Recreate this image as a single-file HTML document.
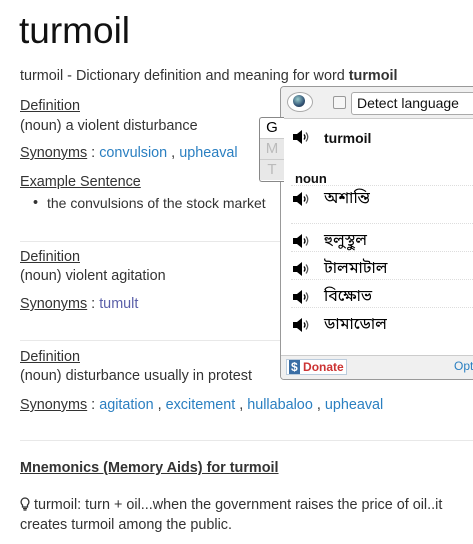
<!DOCTYPE html>
<html><head><meta charset="utf-8"><style>
body{margin:0;width:473px;height:544px;overflow:hidden;background:#fff;font-family:"Liberation Sans",sans-serif;font-size:14.4px;color:#333;position:relative}
.a{position:absolute;white-space:nowrap;line-height:20px}
u{color:#333}
.l{color:#2a7fc1}
.hr{position:absolute;left:20px;width:453px;height:1px;background:#e8e8e8}
.bn{font-family:"Liberation Sans","Noto Sans Bengali","Lohit Bengali",sans-serif;font-size:16px;color:#000;position:absolute;left:43px}
.sp{position:absolute;left:11px}
.dot{position:absolute;left:10px;right:0;border-top:1px dotted #ddd}
</style></head><body>
<svg width="0" height="0" style="position:absolute"><defs><symbol id="spk" viewBox="0 0 18 16"><path d="M1 5h4l5-4v14l-5-4H1z" fill="#000"/><path d="M12 5.5q2 2.5 0 5" stroke="#000" stroke-width="1.4" fill="none"/><path d="M14 3.5q3.5 4.5 0 9" stroke="#555" stroke-width="1.2" fill="none"/></symbol></defs></svg>
<div class="a" style="left:19px;top:10px;font-size:37px;line-height:42px;color:#111">turmoil</div>
<div class="a" style="left:20px;top:66px">turmoil - Dictionary definition and meaning for word <b>turmoil</b></div>
<div class="a" style="left:20px;top:96px"><u>Definition</u></div>
<div class="a" style="left:20px;top:116px">(noun) a violent disturbance</div>
<div class="a" style="left:20px;top:143px"><u>Synonyms</u> : <span class="l">convulsion</span> , <span class="l">upheaval</span></div>
<div class="a" style="left:20px;top:172px"><u>Example Sentence</u></div>
<div class="a" style="left:33px;top:193px">•</div>
<div class="a" style="left:47px;top:193px;font-size:14px">the convulsions of the stock market</div>
<div class="hr" style="top:241px"></div>
<div class="a" style="left:20px;top:247px"><u>Definition</u></div>
<div class="a" style="left:20px;top:266px">(noun) violent agitation</div>
<div class="a" style="left:20px;top:294px"><u>Synonyms</u> : <span class="l" style="color:#5a5fa8">tumult</span></div>
<div class="hr" style="top:340px"></div>
<div class="a" style="left:20px;top:347px"><u>Definition</u></div>
<div class="a" style="left:20px;top:366px">(noun) disturbance usually in protest</div>
<div class="a" style="left:20px;top:395px"><u>Synonyms</u> : <span class="l">agitation</span> , <span class="l">excitement</span> , <span class="l">hullabaloo</span> , <span class="l">upheaval</span></div>
<div class="hr" style="top:440px"></div>
<div class="a" style="left:20px;top:458px;font-weight:bold"><u>Mnemonics (Memory Aids) for turmoil</u></div>
<div class="a" style="left:20px;top:495px"><svg width="10" height="14" viewBox="0 0 10 14" style="vertical-align:-2px"><path d="M5 1a4 4 0 0 0-2.5 7v2h5V8A4 4 0 0 0 5 1z" fill="none" stroke="#333" stroke-width="1.3"/><path d="M3 11.5h4M3.5 13h3" stroke="#333" stroke-width="1.2"/></svg> turmoil: turn + oil...when the government raises the price of oil..it</div>
<div class="a" style="left:20px;top:515px">creates turmoil among the public.</div>

<div style="position:absolute;left:280px;top:86px;width:200px;height:292px;border:1px solid #999;border-radius:4px 0 0 4px;background:#fff;overflow:hidden">
 <div style="position:absolute;left:0;top:0;right:0;height:31px;background:#f0f0f0;border-bottom:1px solid #ccc"></div>
 <div style="position:absolute;left:6px;top:5px;width:24px;height:18px;border:1px solid #aaa;border-radius:50%;background:#fff"></div>
 <div style="position:absolute;left:12px;top:8px;width:12px;height:12px;border-radius:50%;background:radial-gradient(circle at 40% 35%,#9cc 0,#357 60%,#223 100%)"></div>
 <div style="position:absolute;left:52px;top:9px;width:11px;height:11px;border:1px solid #999;border-radius:2px;background:#f6f6f6"></div>
 <div style="position:absolute;left:70px;top:5px;width:130px;height:21px;border:1px solid #aaa;border-radius:3px;background:#fff;font-size:14px;line-height:21px;padding-left:5px;color:#111">Detect language</div>
 <svg class="sp" style="top:42px" width="18" height="16"><use href="#spk"/></svg>
 <div style="position:absolute;left:43px;top:43px;font-weight:bold;font-size:14px;color:#111">turmoil</div>
 <div style="position:absolute;left:14px;top:84px;font-weight:bold;font-size:13px;color:#111">noun</div>
 <div class="dot" style="top:98px"></div>
 <svg class="sp" style="top:104px" width="18" height="16"><use href="#spk"/></svg><div class="bn" style="top:101px">অশান্তি</div>
 <div class="dot" style="top:136px"></div>
 <svg class="sp" style="top:146px" width="18" height="16"><use href="#spk"/></svg><div class="bn" style="top:143px">হুলুস্থুল</div>
 <div class="dot" style="top:164px"></div>
 <svg class="sp" style="top:174px" width="18" height="16"><use href="#spk"/></svg><div class="bn" style="top:171px">টালমাটাল</div>
 <div class="dot" style="top:192px"></div>
 <svg class="sp" style="top:202px" width="18" height="16"><use href="#spk"/></svg><div class="bn" style="top:199px">বিক্ষোভ</div>
 <div class="dot" style="top:220px"></div>
 <svg class="sp" style="top:230px" width="18" height="16"><use href="#spk"/></svg><div class="bn" style="top:227px">ডামাডোল</div>
 <div style="position:absolute;left:0;top:268px;right:0;height:30px;background:#f0f0f0;border-top:1px solid #ccc"></div>
 <div style="position:absolute;left:5px;top:272px;height:14px;border:1px solid #bcd;background:#fff;font-size:12px;font-weight:bold;color:#c33;line-height:14px;padding:0 2px"><span style="background:#3a6ea5;color:#fff;padding:0 2px">$</span> Donate</div>
 <div style="position:absolute;left:173px;top:272px;font-size:12px;color:#2a7fc1">Opt</div>
</div>
<div style="position:absolute;left:259px;top:117px;width:24px;height:63px;border:1px solid #888;border-right:none;border-radius:3px 0 0 3px;background:#fff;font-size:15px;text-align:center;line-height:20px">
 <div style="height:20px;color:#000">G</div>
 <div style="height:20px;background:#e8e8e8;color:#bbb;border-top:1px solid #ccc">M</div>
 <div style="height:20px;background:#e8e8e8;color:#bbb;border-top:1px solid #ccc">T</div>
</div>
</body></html>
